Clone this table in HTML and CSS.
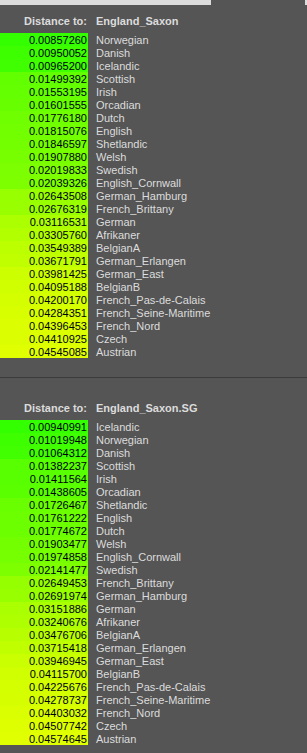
FILE: index.html
```html
<!DOCTYPE html>
<html>
<head>
<meta charset="utf-8">
<link rel="stylesheet" href="styles.css">
</head>
<body>
<div class="topbar"><span class="tab"></span><span class="edge"></span></div>

<section class="panel first">
  <div class="head"><span class="num">Distance to:</span><span class="name">England_Saxon</span></div>
  <div class="rows">
    <div class="row"><span class="num" style="background:#33ff00">0.00857260</span><span class="name">Norwegian</span></div>
    <div class="row"><span class="num" style="background:#3eff00">0.00950052</span><span class="name">Danish</span></div>
    <div class="row"><span class="num" style="background:#3fff00">0.00965200</span><span class="name">Icelandic</span></div>
    <div class="row"><span class="num" style="background:#62ff00">0.01499392</span><span class="name">Scottish</span></div>
    <div class="row"><span class="num" style="background:#64ff00">0.01553195</span><span class="name">Irish</span></div>
    <div class="row"><span class="num" style="background:#67ff00">0.01601555</span><span class="name">Orcadian</span></div>
    <div class="row"><span class="num" style="background:#70ff00">0.01776180</span><span class="name">Dutch</span></div>
    <div class="row"><span class="num" style="background:#72ff00">0.01815076</span><span class="name">English</span></div>
    <div class="row"><span class="num" style="background:#74ff00">0.01846597</span><span class="name">Shetlandic</span></div>
    <div class="row"><span class="num" style="background:#77ff00">0.01907880</span><span class="name">Welsh</span></div>
    <div class="row"><span class="num" style="background:#7cff00">0.02019833</span><span class="name">Swedish</span></div>
    <div class="row"><span class="num" style="background:#7dff00">0.02039326</span><span class="name">English_Cornwall</span></div>
    <div class="row"><span class="num" style="background:#97ff00">0.02643508</span><span class="name">German_Hamburg</span></div>
    <div class="row"><span class="num" style="background:#99ff00">0.02676319</span><span class="name">French_Brittany</span></div>
    <div class="row"><span class="num" style="background:#abff00">0.03116531</span><span class="name">German</span></div>
    <div class="row"><span class="num" style="background:#b2ff00">0.03305760</span><span class="name">Afrikaner</span></div>
    <div class="row"><span class="num" style="background:#bcff00">0.03549389</span><span class="name">BelgianA</span></div>
    <div class="row"><span class="num" style="background:#c0ff00">0.03671791</span><span class="name">German_Erlangen</span></div>
    <div class="row"><span class="num" style="background:#ccff00">0.03981425</span><span class="name">German_East</span></div>
    <div class="row"><span class="num" style="background:#d0ff00">0.04095188</span><span class="name">BelgianB</span></div>
    <div class="row"><span class="num" style="background:#d4ff00">0.04200170</span><span class="name">French_Pas-de-Calais</span></div>
    <div class="row"><span class="num" style="background:#d7ff00">0.04284351</span><span class="name">French_Seine-Maritime</span></div>
    <div class="row"><span class="num" style="background:#dbff00">0.04396453</span><span class="name">French_Nord</span></div>
    <div class="row"><span class="num" style="background:#dbff00">0.04410925</span><span class="name">Czech</span></div>
    <div class="row"><span class="num" style="background:#e0ff00">0.04545085</span><span class="name">Austrian</span></div>
  </div>
</section>

<section class="panel second">
  <div class="head"><span class="num">Distance to:</span><span class="name">England_Saxon.SG</span></div>
  <div class="rows">
    <div class="row"><span class="num" style="background:#33ff00">0.00940991</span><span class="name">Icelandic</span></div>
    <div class="row"><span class="num" style="background:#3dff00">0.01019948</span><span class="name">Norwegian</span></div>
    <div class="row"><span class="num" style="background:#41ff00">0.01064312</span><span class="name">Danish</span></div>
    <div class="row"><span class="num" style="background:#57ff00">0.01382237</span><span class="name">Scottish</span></div>
    <div class="row"><span class="num" style="background:#58ff00">0.01411564</span><span class="name">Irish</span></div>
    <div class="row"><span class="num" style="background:#5aff00">0.01438605</span><span class="name">Orcadian</span></div>
    <div class="row"><span class="num" style="background:#6aff00">0.01726467</span><span class="name">Shetlandic</span></div>
    <div class="row"><span class="num" style="background:#6cff00">0.01761222</span><span class="name">English</span></div>
    <div class="row"><span class="num" style="background:#6cff00">0.01774672</span><span class="name">Dutch</span></div>
    <div class="row"><span class="num" style="background:#73ff00">0.01903477</span><span class="name">Welsh</span></div>
    <div class="row"><span class="num" style="background:#76ff00">0.01974858</span><span class="name">English_Cornwall</span></div>
    <div class="row"><span class="num" style="background:#7eff00">0.02141477</span><span class="name">Swedish</span></div>
    <div class="row"><span class="num" style="background:#95ff00">0.02649453</span><span class="name">French_Brittany</span></div>
    <div class="row"><span class="num" style="background:#97ff00">0.02691974</span><span class="name">German_Hamburg</span></div>
    <div class="row"><span class="num" style="background:#aaff00">0.03151886</span><span class="name">German</span></div>
    <div class="row"><span class="num" style="background:#aeff00">0.03240676</span><span class="name">Afrikaner</span></div>
    <div class="row"><span class="num" style="background:#b7ff00">0.03476706</span><span class="name">BelgianA</span></div>
    <div class="row"><span class="num" style="background:#c0ff00">0.03715418</span><span class="name">German_Erlangen</span></div>
    <div class="row"><span class="num" style="background:#c9ff00">0.03946945</span><span class="name">German_East</span></div>
    <div class="row"><span class="num" style="background:#cfff00">0.04115700</span><span class="name">BelgianB</span></div>
    <div class="row"><span class="num" style="background:#d3ff00">0.04225676</span><span class="name">French_Pas-de-Calais</span></div>
    <div class="row"><span class="num" style="background:#d5ff00">0.04278737</span><span class="name">French_Seine-Maritime</span></div>
    <div class="row"><span class="num" style="background:#daff00">0.04403032</span><span class="name">French_Nord</span></div>
    <div class="row"><span class="num" style="background:#deff00">0.04507742</span><span class="name">Czech</span></div>
    <div class="row"><span class="num" style="background:#e0ff00">0.04574645</span><span class="name">Austrian</span></div>
  </div>
</section>
</body>
</html>
```
FILE: styles.css
```css
html, body {
  margin: 0;
  padding: 0;
  background: #555555;
  font-family: "Liberation Sans", Arial, sans-serif;
  font-size: 11px;
  overflow: hidden;
}

.topbar {
  display: flex;
  justify-content: space-between;
  height: 5px;
}

.topbar .tab {
  width: 211px;
  background: #dcdcdc;
}

.topbar .edge {
  width: 2px;
  background: #dcdcdc;
}

.panel {
  display: flex;
  flex-direction: column;
  gap: 5px;
}

.panel.first {
  padding-top: 10px;
  padding-bottom: 19px;
}

.panel.second {
  border-top: 1px solid #3c3c3c;
  padding-top: 24px;
}

.head,
.row {
  display: flex;
  height: 13px;
  box-sizing: border-box;
}

.head {
  font-weight: bold;
  color: #dcdcdc;
  line-height: 13px;
}

.row {
  line-height: 11px;
}

.num {
  width: 88px;
  flex: none;
  text-align: right;
  padding-right: 1px;
  box-sizing: border-box;
}

.row .num {
  color: #000;
  padding-top: 2px;
}

.name {
  padding-left: 8px;
  color: #dcdcdc;
  white-space: nowrap;
}

.row .name {
  padding-top: 2px;
}

.rows {
  display: flex;
  flex-direction: column;
}
```
